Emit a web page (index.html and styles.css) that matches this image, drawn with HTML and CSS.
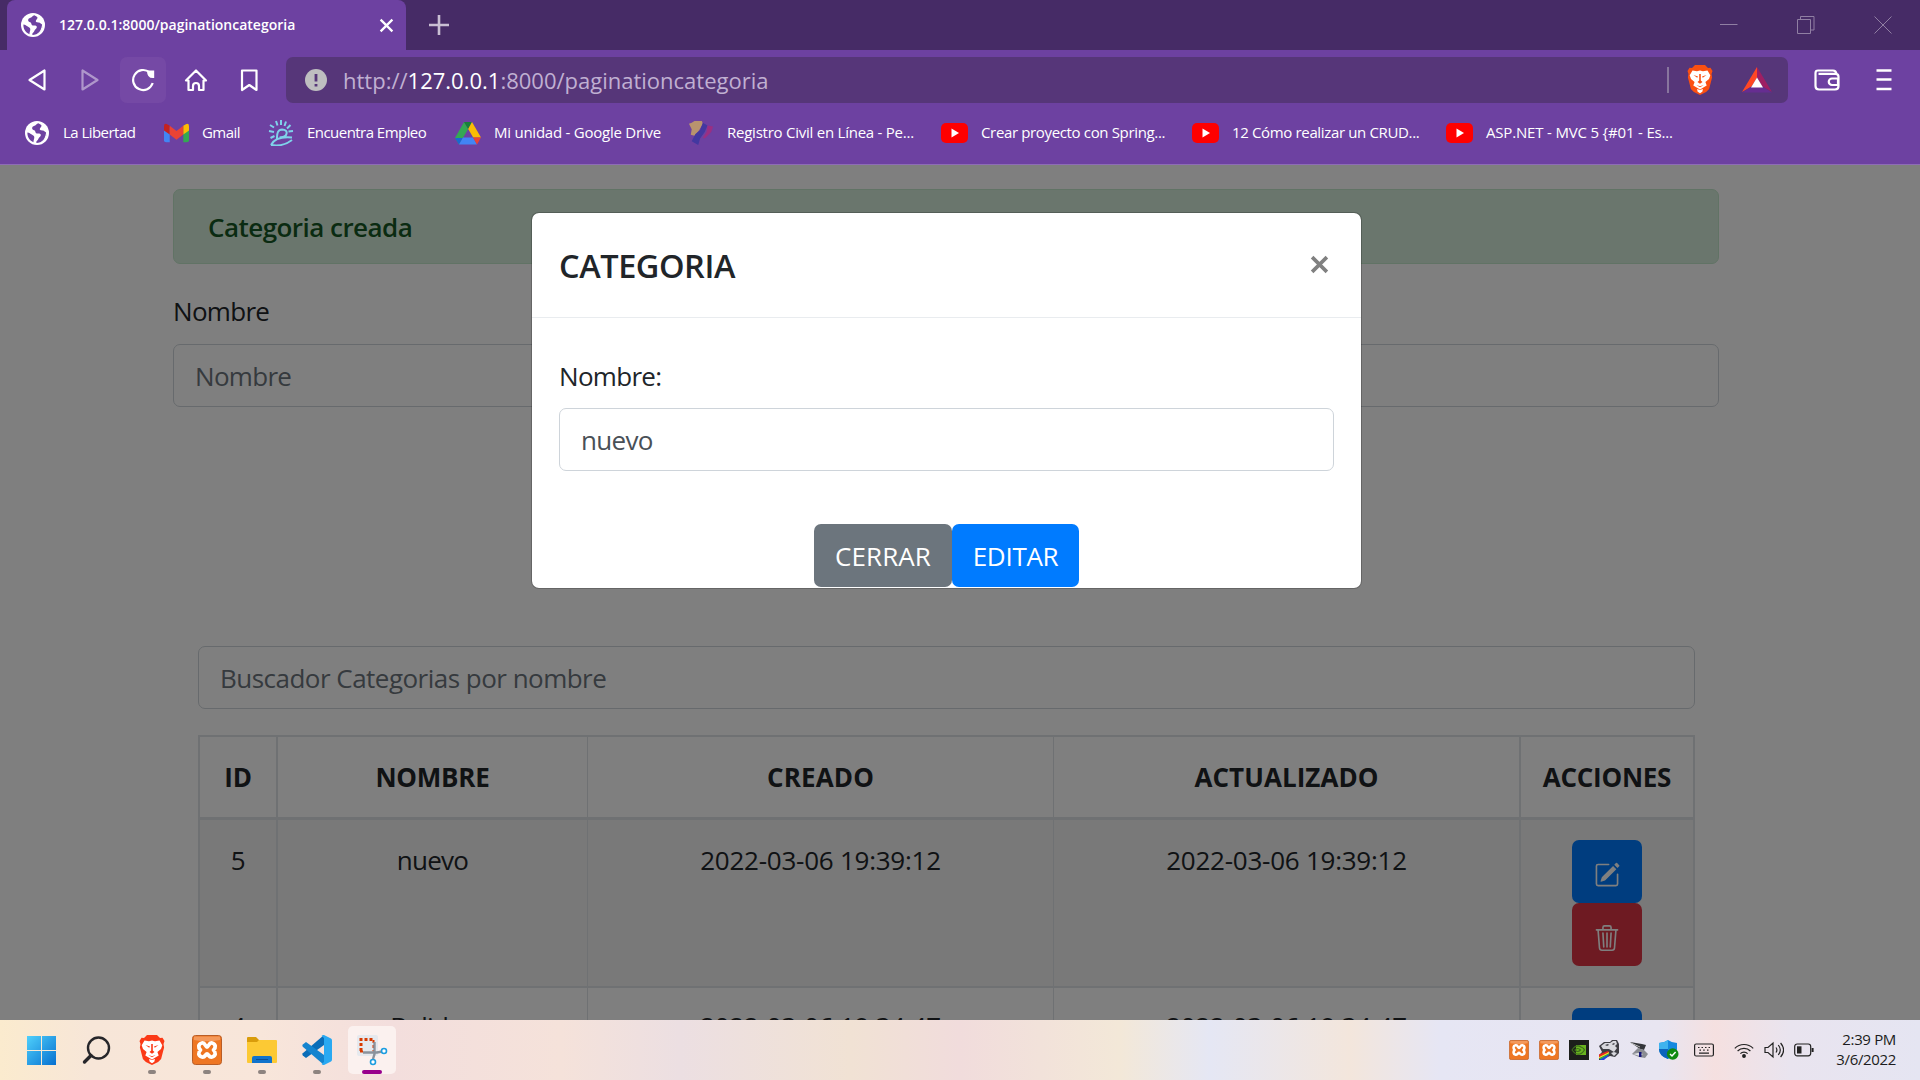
FILE: index.html
```
<!DOCTYPE html>
<html lang="es">
<head>
<meta charset="utf-8">
<title>127.0.0.1:8000/paginationcategoria</title>
<link rel="stylesheet" href="styles.css">
</head>
<body>
<svg class="defs" aria-hidden="true">
  <symbol id="globe" viewBox="0 0 24 24">
    <circle cx="12" cy="12" r="12" fill="#fff"/>
    <path d="M13.500 2.200c-2.300.2-2.200 2.300-4 2.600-1.600.3-2.700 1.500-2.300 2.900.4 1.300 2 1.100 2.700 2 .7 1 .3 2.400 1.800 2.800 1.400.3 2.500-.2 3.600.6 1.200.8.3 2.300-.8 3.100-1.200.9-1.100 2.500-2.200 3.200-.8.5-1.300 1.400-.8 2.500 5.600 0 10-4.300 10.200-9.700-.7-1.500-1.800-1.500-2.700-2.300-.8-.8-2-.3-3.200-.6-1.600-.4-1-2-.2-2.800.9-.9 1.300-1.900.4-2.700-.8-.7-1.700-.8-2.500-1.600z" fill="#6d41a1"/>
    <path d="M2.400 11.500c1.900.2 3 1.300 4.400 2.100 1.500.9 2.600 1.500 2.500 3.100-.1 1.500-1 2.900-.8 4.500C4.800 19.700 2.200 16 2.400 11.500z" fill="#6d41a1"/>
    <path d="M21.500 9a10 10 0 0 1-8.500 13c5-1 7.500-4 8.500-13z" fill="#fff"/>
  </symbol>
  <symbol id="youtube" viewBox="0 0 27 20">
    <rect width="27" height="20" rx="5" fill="#f00"/>
    <path d="M10.500 5.500v9l7.500-4.500z" fill="#fff"/>
  </symbol>
  <symbol id="lion" viewBox="0 0 26 30">
    <path d="M8 0h10l3 3 2.500-.3L25.500 6l-1 3 .6 3.500-3 11.500-3 3L13 30l-6.100-3-3-3L.9 12.500 1.500 9l-1-3 2-3.300L5 3z"/>
    <path d="M5.500 5.500 10 6.200l3-.8 3 .8 4.500-.7 2.800 4.700-1.300 3.800-3.600 3 1.300 3.500L13 24.500 6.300 20.500l1.300-3.500-3.600-3-1.300-3.800z" fill="#fff"/>
    <path d="m6.500 10 4.500 1.500-.8 1.300zM19.500 10l-4.500 1.500.8 1.300zM12.200 9h1.600v6.500l1.700 1.500-2.500 1.700-2.500-1.700 1.700-1.500zM9.200 20l3.800 1.200 3.800-1.200-3.800 2.300z"/>
    <path d="m10 24 3 1 3-1-.7 2.800-2.300 1.400-2.300-1.400z" fill="#fff"/>
  </symbol>
  <symbol id="xampp" viewBox="0 0 30 30">
    <rect x=".5" y=".5" width="29" height="29" rx="3" fill="#ee7623" stroke="#b95d26"/>
    <path d="M2 1.500h26v3.500q-13 2.500-26 0z" fill="#f7a873" opacity=".7"/>
    <path d="M10 8c3-.8 3.500 4 5 4s2-4.800 5-4c4 1 4 4.500 1.500 7 2.500 2.500 2.500 6-1.500 7-3 .8-3.500-3-5-3s-2 3.800-5 3c-4-1-4-4.500-1.500-7C6 12.500 6 9 10 8z" fill="none" stroke="#fff" stroke-width="3.800" stroke-linejoin="round"/>
  </symbol>
  <symbol id="pencil" viewBox="0 0 16 16">
    <path d="M15.502 1.940a.5.5 0 0 1 0 .706L14.459 3.690l-2-2L13.502.646a.5.5 0 0 1 .707 0l1.293 1.293zm-1.750 2.456-2-2L4.939 9.210a.5.5 0 0 0-.121.196l-.805 2.414a.25.25 0 0 0 .316.316l2.414-.805a.5.5 0 0 0 .196-.12l6.813-6.814z"/>
    <path fill-rule="evenodd" d="M1 13.500A1.500 1.500 0 0 0 2.500 15h11a1.500 1.500 0 0 0 1.500-1.500v-6a.5.5 0 0 0-1 0v6a.5.5 0 0 1-.5.5h-11a.5.5 0 0 1-.5-.5v-11a.5.5 0 0 1 .5-.5H9a.5.5 0 0 0 0-1H2.500A1.500 1.500 0 0 0 1 2.500v11z"/>
  </symbol>
  <symbol id="trash" viewBox="0 0 16 16">
    <path d="M6.500 1h3a.5.5 0 0 1 .5.5v1H6v-1a.5.5 0 0 1 .5-.5ZM11 2.500v-1A1.500 1.500 0 0 0 9.500 0h-3A1.500 1.500 0 0 0 5 1.500v1H2.506a.58.58 0 0 0-.01 0H1.500a.5.5 0 0 0 0 1h.538l.853 10.660A2 2 0 0 0 4.885 16h6.230a2 2 0 0 0 1.994-1.840l.853-10.660h.538a.5.5 0 0 0 0-1h-.995a.59.59 0 0 0-.01 0H11Zm1.958 1-.846 10.580a1 1 0 0 1-.997.920h-6.230a1 1 0 0 1-.997-.920L3.042 3.500h9.916Zm-7.487 1a.5.5 0 0 1 .528.470l.5 8.500a.5.5 0 0 1-.998.060L5 5.030a.5.5 0 0 1 .470-.530Zm5.058 0a.5.5 0 0 1 .470.530l-.5 8.500a.5.5 0 1 1-.998-.060l.5-8.500a.5.5 0 0 1 .528-.470ZM8 4.500a.5.5 0 0 1 .5.5v8.500a.5.5 0 0 1-1 0V5a.5.5 0 0 1 .5-.5Z"/>
  </symbol>
</svg>

<div class="screen">
  <header class="browser">
    <div class="tabs">
      <div class="tab">
        <svg class="i24"><use href="#globe"/></svg>
        <span class="tab-title">127.0.0.1:8000/paginationcategoria</span>
        <svg class="tab-close" viewBox="0 0 14 14"><path d="M1.500 1.500l11 11M12.500 1.500l-11 11"/></svg>
      </div>
      <svg class="new-tab" viewBox="0 0 20 20"><path d="M10 0v20M0 10h20"/></svg>
      <div class="window-controls">
        <svg viewBox="0 0 18 18"><path d="M0 8.500h17.500"/></svg>
        <svg viewBox="0 0 18 18"><path d="M.5 3.500h13v14H.5zM3.500 3V.5h13.500v13.500h-3"/></svg>
        <svg viewBox="0 0 18 18"><path d="M.5.5l17 17M17.500.5l-17 17"/></svg>
      </div>
    </div>

    <nav class="toolbar">
      <div class="nav-icon"><svg viewBox="0 0 24 24"><path d="M19.500 2.500v19L4.500 12z"/></svg></div>
      <div class="nav-icon faded"><svg viewBox="0 0 24 24"><path d="M4.500 2.500v19l15-9.500z"/></svg></div>
      <div class="nav-icon active"><svg viewBox="0 0 24 24"><path d="M21.700 15A10 10 0 1 1 18.500 4.300"/><path d="M16 2.500h7.200v7.500q-7.200 1-7.200-7.500z" fill="#fff" stroke="none"/></svg></div>
      <div class="nav-icon"><svg viewBox="0 0 24 24"><path d="M2 12.500 12 2.500l10 10h-2.500V22h-4.500v-4q0-3-3-3t-3 3v4H4.500v-9.500z"/></svg></div>
      <div class="nav-icon"><svg viewBox="0 0 24 24"><path d="M5 2.500h14.500v19.500L12.300 17 5 22z"/></svg></div>
      <div class="address">
        <svg class="info" viewBox="0 0 22 22"><circle cx="11" cy="11" r="11" fill="#bebec0"/><path d="M11 5v7.500M11 15v2.600" stroke="#563679" stroke-width="2.800"/></svg>
        <span class="url">http://<b>127.0.0.1</b>:8000/paginationcategoria</span>
        <span class="divider"></span>
        <svg class="shield" fill="#fb5012"><use href="#lion"/></svg>
        <svg class="bat" viewBox="0 0 30 26"><path d="M15 0 0 25l9.500-5.500L15 10.500z" fill="#ff4724"/><path d="M15 0l15 25-9.500-5.500L15 10.500z" fill="#9e1f63"/><path d="M0 25.500h30l-9.500-6h-11z" fill="#662d91"/><path d="M15 10.500 9 20.500h12z" fill="#fff"/></svg>
      </div>
      <svg class="wallet" viewBox="0 0 26 22"><path d="M4 1.500h15q3 0 3.500 3.500M4.500 4.800h17q3 0 3 3V17q0 3.500-3.500 3.500H5q-3.500 0-3.500-3.500V4q0-2.500 2.500-2.500M24 9.500h-6a3 3 0 0 0 0 6.500h6z"/></svg>
      <svg class="menu" viewBox="0 0 15 22"><path d="M0 1.500h15M0 10.500h15M0 20h15"/></svg>
    </nav>

    <div class="bookmarks">
      <a class="bm"><svg class="i24"><use href="#globe"/></svg><span class="t1">La Libertad</span></a>
      <a class="bm"><svg class="i25" viewBox="0 0 24 20"><path d="M0 4h5.500v14.500H2Q0 18.500 0 16.500z" fill="#4285f4"/><path d="M18.500 4H24v12.500q0 2-2 2h-3.500z" fill="#34a853"/><path d="M18.500 2.500 21 1q3-1 3 2v4l-5.500 4z" fill="#fbbc04"/><path d="M5.500 2.500 3 1Q0 0 0 3v4l5.500 4z" fill="#c5221f"/><path d="M5.500 2.500 12 7.500l6.500-5V11L12 16l-6.500-5z" fill="#ea4335"/></svg><span class="t1">Gmail</span></a>
      <a class="bm"><svg class="i26" viewBox="0 0 26 26"><g fill="none" stroke="#7fd3ea" stroke-width="2"><path d="M9 19q-.5-9.500 5-9.500 5.500.2 4.500 4.200-1 4-7 3.500M3 25q4.500-9 21-7.500M3 25q12 2 21-5"/><path d="M2 5l4 2.500M1 11l5 1M2.500 18l4-2M8 1l1.500 4.500M13 0v5M18 1.500 16.500 6M22.500 5l-3.500 3.500M25 11l-4.500.5"/></g></svg><span class="t1">Encuentra Empleo</span></a>
      <a class="bm"><svg class="i26" viewBox="0 0 26 24"><path d="M9 1 0 17l4 6.500L13.200 8z" fill="#34a853"/><path d="M9 1h8l-3.800 7z" fill="#188038"/><path d="M17 1l-3.800 7 5 8.500H26z" fill="#fbbc04"/><path d="M0 17h8l-4 6.500z" fill="#1967d2"/><path d="M8 16.500h10l4 7H4z" fill="#4285f4"/><path d="M18 16.500h8l-4 7z" fill="#ea4335"/></svg><span class="t2">Mi unidad - Google Drive</span></a>
      <a class="bm"><svg class="i26" viewBox="0 0 26 28"><path d="M0 4l3-1 3-2 8 0 1 3-4 7-5 6-4-1 1-6z" fill="#b8936e"/><path d="M15 3l5 3-3 7-5 7-2 7-7-4 4-8 5-4z" fill="#4338a0"/><path d="M20 6l6 1-2 6-7 7-2-1 4-6z" fill="#9a2f83"/></svg><span class="t2">Registro Civil en Línea - Pe...</span></a>
      <a class="bm"><svg class="yt"><use href="#youtube"/></svg><span class="t3">Crear proyecto con Spring...</span></a>
      <a class="bm"><svg class="yt"><use href="#youtube"/></svg><span class="t3">12 Cómo realizar un CRUD...</span></a>
      <a class="bm"><svg class="yt"><use href="#youtube"/></svg><span class="t4">ASP.NET - MVC 5 {#01 - Es...</span></a>
    </div>
  </header>

  <main class="page">
    <div class="container">
      <div class="alert">Categoria creada</div>
      <div class="label">Nombre</div>
      <div class="control placeholder">Nombre</div>
      <section class="listing">
        <div class="control placeholder search">Buscador Categorias por nombre</div>
        <div class="table">
          <div class="row head">
            <div>ID</div><div>NOMBRE</div><div class="cre">CREADO</div><div class="act">ACTUALIZADO</div><div>ACCIONES</div>
          </div>
          <div class="row striped">
            <div>5</div><div>nuevo</div><div>2022-03-06 19:39:12</div><div>2022-03-06 19:39:12</div>
            <div class="actions"><span class="btn edit"><svg><use href="#pencil"/></svg></span><span class="btn delete"><svg><use href="#trash"/></svg></span></div>
          </div>
          <div class="row next">
            <div>4</div><div>Bolidos</div><div>2022-03-06 19:34:47</div><div>2022-03-06 19:34:47</div>
            <div class="actions"><span class="btn edit"><svg><use href="#pencil"/></svg></span><span class="btn delete"><svg><use href="#trash"/></svg></span></div>
          </div>
        </div>
      </section>
    </div>
    <div class="backdrop"></div>
    <div class="modal">
      <div class="modal-header">
        <h5>CATEGORIA</h5>
        <svg class="close" viewBox="0 0 18 18"><path d="M2 2l14 14M16 2 2 16"/></svg>
      </div>
      <div class="modal-body">
        <div class="label">Nombre:</div>
        <div class="control">nuevo</div>
      </div>
      <div class="modal-actions"><span class="cta secondary">CERRAR</span><span class="cta primary">EDITAR</span></div>
    </div>
  </main>

  <footer class="taskbar">
    <div class="apps">
      <div class="app"><svg viewBox="0 0 48 48"><defs><linearGradient id="win" x1="0" y1="0" x2="1" y2="1"><stop offset="0" stop-color="#4fd0fb"/><stop offset="1" stop-color="#0670d0"/></linearGradient></defs><path d="M9 10h14v14H9zM24 10h14v14H24zM9 25h14v14H9zM24 25h14v14H24z" fill="url(#win)"/></svg></div>
      <div class="app"><svg viewBox="0 0 48 48"><g fill="none" stroke="#26262a"><circle cx="25.500" cy="22" r="10.500" stroke-width="2.400"/><path d="M18 29.500 11.500 36" stroke-width="3.400" stroke-linecap="round"/></g></svg></div>
      <div class="app open"><svg viewBox="0 0 48 48"><g fill="#fb3a17"><use href="#lion" x="11" y="9" width="26" height="30"/></g></svg></div>
      <div class="app open"><svg viewBox="0 0 48 48"><use href="#xampp" x="9" y="9" width="30" height="30"/></svg></div>
      <div class="app open"><svg viewBox="0 0 48 48"><path d="M9 12q0-1 1-1h8l3 3v4H9z" fill="#d99c0b"/><path d="M9 16h10l2-2h17q1 0 1 1v21q0 1-1 1H10q-1 0-1-1z" fill="#fcc934"/><path d="M14 37v-5q0-2 2-2h16q2 0 2 2v5z" fill="#1173cc"/><path d="M18 33.500h12" stroke="#0b4f96"/></svg></div>
      <div class="app open"><svg viewBox="0 0 48 48"><path d="M31 9v10L13 32l-3.200-2.500q-1-1 0-2.200z" fill="#0a6db8"/><path d="M31 39V29L13 16l-3.200 2.500q-1 1 0 2.200z" fill="#1484cf"/><path d="M31 9l7 3.500q1 .5 1 2v19q0 1.500-1 2L31 39q-1.500.3-2.500-1l2.500-2V12l-2.500-2q1-1.300 2.500-1z" fill="#29a9f2"/></svg></div>
      <div class="app current"><svg viewBox="0 0 48 48"><rect x="9" y="9" width="21" height="21" rx="2" fill="#e6e9ee"/><path d="M13 25V13.500h13" fill="none" stroke="#d83b01" stroke-width="3" stroke-dasharray="3 2"/><path d="M25.500 14v11.500M13 24.500v1h3" fill="none" stroke="#d83b01" stroke-width="2" stroke-dasharray="3 2"/><path d="M26.500 16v12l-1.500 5M15 26.500h14l5-1" fill="none" stroke="#8a929c" stroke-width="2.400"/><circle cx="36" cy="25" r="2.500" fill="#fff" stroke="#1c9de0" stroke-width="1.600"/><circle cx="25" cy="36" r="2.500" fill="#fff" stroke="#1c9de0" stroke-width="1.600"/></svg></div>
    </div>
    <div class="tray">
      <svg class="i20"><use href="#xampp"/></svg>
      <svg class="i20"><use href="#xampp"/></svg>
      <svg class="i20" viewBox="0 0 20 20"><path d="M0 0h20v20H0z" fill="#1c1e1b"/><path d="M7 5h10v10H7z" fill="#69b41e"/><path d="M3 10q4-6 9-3 3 1 3.500 3-4 6-9 3.500Q4.500 12 3 10zm3 0q2.500-3 5.500 0-3 3-5.500 0z" fill="none" stroke="#3c6a1c" stroke-width="1.200"/></svg>
      <svg class="i20" viewBox="0 0 20 20"><path d="M0 6l5-4h6l2-2h5l2 4v9l-4 4-5-1-9 4H0v-5l3-3z" fill="#3e3e44"/><path d="M2 6l4-3h5l3-2h3l1 3-2 2 2 2-3 4-5-3-6 0zM12 13l3-1 3 1-3 3z" fill="#d8d8de"/><path d="M6 5l3-1 1 1-2 1zM13 4l2-1 1 1-2 1z" fill="#44444c"/><path d="M0 14.500l9-3.500 1 1L0 17z" fill="#e22"/><path d="M0 17l10-5v1.500L0 18.500z" fill="#fd2"/><path d="M0 18.500l10-5v1L2 19.500z" fill="#2b5"/><path d="M1 19.500 10 14.500l-1 2L5 20H1z" fill="#24d"/></svg>
      <svg class="i20" viewBox="0 0 20 20"><path d="M1 2l12 2 4 1-2 5-4-1z" fill="#34363a"/><path d="M2 3l9 4" stroke="#bbb"/><path d="M3 14l6-6 6 2 4 4-3 4-6-1z" fill="#8a8c92"/><path d="M4 14l5-1 5 1-3 2z" fill="#e4e4e8"/><path d="M10 12h2.500v5H10z" fill="#16167a"/></svg>
      <svg class="i20" viewBox="0 0 20 20"><path d="M9 0q4 3 9 3v6q0 7-9 10Q0 16 0 9V3q5 0 9-3z" fill="#1489e0"/><path d="M9 0v9H0V3q5 0 9-3z" fill="#3fb3ee"/><path d="M0 9h9v10Q0 16 0 9z" fill="#0b64bb"/><circle cx="13.700" cy="14" r="5.800" fill="#118a11"/><path d="M11 14l2 2 3.600-4" fill="none" stroke="#fff" stroke-width="1.500"/></svg>
      <svg class="i20 kb line" viewBox="0 0 20 20"><rect x=".6" y="4" width="18.800" height="12" rx="1.500"/><path d="M4 7.500h1.500M7.500 7.500H9M11 7.500h1.500M14.500 7.500H16M5.500 10.200H7M9.200 10.200h1.500M13 10.200h1.500M5 13.200h10"/></svg>
      <svg class="i20 line" viewBox="0 0 20 20"><path d="M.8 8.300a13 13 0 0 1 18.400 0M3.600 11a9 9 0 0 1 12.800 0M6.400 13.600a5 5 0 0 1 7.200 0"/><circle cx="10" cy="16" r="1.300" fill="#222"/></svg>
      <svg class="i20 line" viewBox="0 0 20 20"><path d="M1 7.500h3L9 3v14l-5-4.500H1zM12 7.500q1.800 2.500 0 5M14.300 5q4 5 0 10M16.600 3q6 7 0 14"/></svg>
      <svg class="i20 line" viewBox="0 0 20 20"><rect x=".7" y="4" width="16" height="11.800" rx="2.500"/><path d="M3 6.300h4.500v7.200H3z" fill="#222" stroke="none"/><path d="M18.600 8v4" stroke-width="2"/></svg>
      <div class="clock"><span>2:39 PM</span><span>3/6/2022</span></div>
    </div>
  </footer>
</div>
</body>
</html>
```
FILE: styles.css
```
* { box-sizing: border-box; }

body {
  margin: 0;
  font-family: "Open Sans", "Noto Sans", sans-serif;
}

svg { display: block; flex: none; }
.defs { position: absolute; width: 0; height: 0; }

.screen {
  width: 1920px;
  height: 1080px;
  display: flex;
  flex-direction: column;
  overflow: hidden;
}

/* Browser chrome */
.browser {
  flex: none;
  height: 165px;
  background: #6d41a1;
  border-bottom: 1px solid #8e6cb6;
  color: #fff;
}

.tabs {
  display: flex;
  align-items: center;
  height: 50px;
  padding-left: 7px;
  background: #462b66;
}

.tab {
  display: flex;
  align-items: center;
  width: 399px;
  height: 50px;
  padding: 0 12px 0 14px;
  border-radius: 8px 8px 0 0;
  background: #6d41a1;
}

.tab-title {
  flex: 1;
  margin-left: 14px;
  font-size: 14px;
  font-weight: 600;
  line-height: 48px;
}

.i20 { width: 20px; height: 20px; }
.i24 { width: 24px; height: 24px; }
.i25 { width: 25px; height: 21px; }
.i26 { width: 26px; height: 26px; }

.tab-close { width: 15px; height: 15px; stroke: #fff; stroke-width: 2.1; }
.new-tab { width: 20px; height: 20px; margin-left: 23px; stroke: #c9bfd3; stroke-width: 2.6; }

.window-controls {
  display: flex;
  gap: 59px;
  margin-left: auto;
  padding-right: 28px;
  fill: none;
  stroke: #907fa3;
}
.window-controls svg { width: 18px; height: 18px; }

.toolbar {
  display: flex;
  align-items: center;
  height: 60px;
  padding: 0 28px 0 14px;
}

.nav-icon {
  display: grid;
  place-items: center;
  width: 46px;
  height: 46px;
  margin-right: 7px;
  border-radius: 7px;
}
.nav-icon svg {
  width: 24px;
  height: 24px;
  fill: none;
  stroke: #fff;
  stroke-width: 2.2;
  stroke-linejoin: round;
}
.nav-icon.active { background: #7549a5; }
.nav-icon.faded { opacity: .45; }

.address {
  display: flex;
  align-items: center;
  flex: 1;
  height: 46px;
  margin-left: 7px;
  padding: 0 16px 0 19px;
  border-radius: 7px;
  background: #563679;
}
.info { width: 22px; height: 22px; }
.url {
  flex: 1;
  margin-left: 16px;
  color: #c0b0d2;
  font-size: 22px;
  line-height: 46px;
}
.url b { color: #fff; font-weight: 400; }
.divider { width: 2px; height: 26px; margin-right: 18px; background: #88759e; }
.shield { width: 26px; height: 30px; margin-right: 29px; }
.bat { width: 30px; height: 26px; }
.wallet { width: 26px; height: 22px; margin-left: 26px; fill: none; stroke: #fff; stroke-width: 2.2; }
.menu { width: 16px; height: 22px; margin-left: 36px; stroke: #fff; stroke-width: 2.6; }

.bookmarks {
  display: grid;
  grid-template-columns: 139px 104px 187px 233px 253px 251px 254px 300px;
  height: 46px;
  padding-left: 25px;
}
.bm {
  display: flex;
  align-items: center;
  gap: 13px;
  font-size: 15px;
  white-space: nowrap;
}
.bm:first-child { gap: 14px; }
.bm span { padding-bottom: 2px; }
.yt { width: 27px; height: 20px; }
.t1 { letter-spacing: -.54px; }
.t2 { letter-spacing: -.24px; }
.t3 { letter-spacing: -.35px; }
.t4 { letter-spacing: -.18px; }

/* Page */
.page {
  position: relative;
  flex: 1;
  overflow: hidden;
  background: #fff;
  color: #212529;
  font-size: 26px;
  letter-spacing: -.7px;
}

.container { margin: 0 201px 0 173px; padding-top: 24px; }

.alert {
  height: 75px;
  padding: 0 34px;
  border: 1px solid #c3e6cb;
  border-radius: 7px;
  background: #d4edda;
  color: #155724;
  font-weight: 600;
  line-height: 75px;
  letter-spacing: -.54px;
}

.label { line-height: 40px; }
.alert + .label { margin: 27px 0 13px; }

.control {
  height: 63px;
  padding: 0 21px;
  border: 1px solid #ced4da;
  border-radius: 7px;
  background: #fff;
  color: #495057;
  line-height: 63px;
}
.control.placeholder { color: #6c757d; }
.control.search { letter-spacing: -.52px; }

.listing { margin: 239px 24px 0 25px; }

.table {
  margin-top: 26px;
  border: 2px solid #dee2e6;
  border-width: 2px 0 0 2px;
}
.row {
  display: grid;
  grid-template-columns: 78px 310px 466px 467px 174px;
  height: 168px;
  line-height: 40px;
  text-align: center;
  letter-spacing: -.25px;
}
.row > div {
  padding-top: 20px;
  border-right: 2px solid #dee2e6;
  border-bottom: 2px solid #dee2e6;
}
.row > div:nth-child(2), .row > div:nth-child(3) { border-right-width: 1px; }
.row > div:nth-child(2):not(.head *) { letter-spacing: -.7px; }
.head { height: 83px; font-weight: 700; }
.head > div { border-bottom-width: 3px; }
.head > .cre { letter-spacing: .14px; }
.head > .act { letter-spacing: .06px; }
.striped { background: #f2f2f2; }
.next > div:not(.actions) { padding-top: 18px; }

.actions { display: flex; flex-direction: column; align-items: center; }
.btn {
  display: grid;
  place-items: center;
  width: 70px;
  height: 63px;
  padding: 6px 1px 0 0;
  border-radius: 7px;
  fill: #fff;
}
.btn svg { width: 26px; height: 26px; }
.edit { background: #007bff; }
.delete { background: #dc3545; }

.backdrop { position: absolute; inset: 0; background: rgba(0, 0, 0, .5); }

.modal {
  position: absolute;
  left: 531px;
  top: 47px;
  width: 831px;
  height: 377px;
  border: 1px solid rgba(0, 0, 0, .2);
  border-radius: 8px;
  background: #fff;
  background-clip: padding-box;
}
.modal-header {
  display: flex;
  align-items: center;
  justify-content: space-between;
  height: 105px;
  padding: 0 32px 0 27px;
  border-bottom: 1px solid #e9ecef;
}
.modal h5 {
  margin: 0;
  font-size: 32.5px;
  font-weight: 600;
  letter-spacing: -.44px;
}
.close { width: 19px; height: 19px; margin-bottom: 2px; stroke: #808080; stroke-width: 3.4; }
.modal-body { padding: 38px 27px 53px; }
.modal-body .label { margin-bottom: 12px; }
.modal-actions { display: flex; justify-content: center; }
.cta {
  height: 63px;
  border-radius: 7px;
  color: #fff;
  line-height: 64px;
  text-align: center;
}
.secondary { width: 138px; background: #6c757d; letter-spacing: .1px; }
.primary { width: 127px; background: #007bff; letter-spacing: -.3px; }

/* Taskbar */
.taskbar {
  display: flex;
  justify-content: space-between;
  flex: none;
  height: 60px;
  background: linear-gradient(90deg, #fbebce 0, #f7e6d8 90px, #f8e6da 260px, #f3dedd 390px, #f5e2da 560px, #ecdfe2 680px, #f1e2d4 850px, #f1dcdc 960px, #f3e8d8 1120px, #e5e7f4 1210px, #f3e6dc 1350px, #e6e6f4 1440px, #e8e5f1 1660px, #f5e0e0 1715px, #e9e4ef 1790px, #e5e5f2 1920px);
}
.apps { display: flex; gap: 7px; padding: 6px 0 6px 18px; }
.app {
  display: flex;
  flex-direction: column;
  width: 48px;
  height: 48px;
  border-radius: 5px;
}
.app svg { width: 48px; height: 48px; }
.open::after, .current::after {
  content: "";
  flex: none;
  width: 8px;
  height: 4px;
  margin: -4px auto 0;
  border-radius: 2px;
  background: #8d837f;
}
.app.current { background: #fbf1ef; }
.app.current::after { width: 20px; background: #98008c; }

.tray { display: flex; align-items: center; gap: 10px; padding-right: 24px; }
.kb { margin: 0 10px 0 5px; }
.line { fill: none; stroke: #222; stroke-width: 1.2; }
.clock {
  display: flex;
  flex-direction: column;
  width: 72px;
  padding-bottom: 2px;
  color: #1c1c20;
  font-size: 15px;
  line-height: 20px;
  letter-spacing: -.34px;
  text-align: right;
}
```
